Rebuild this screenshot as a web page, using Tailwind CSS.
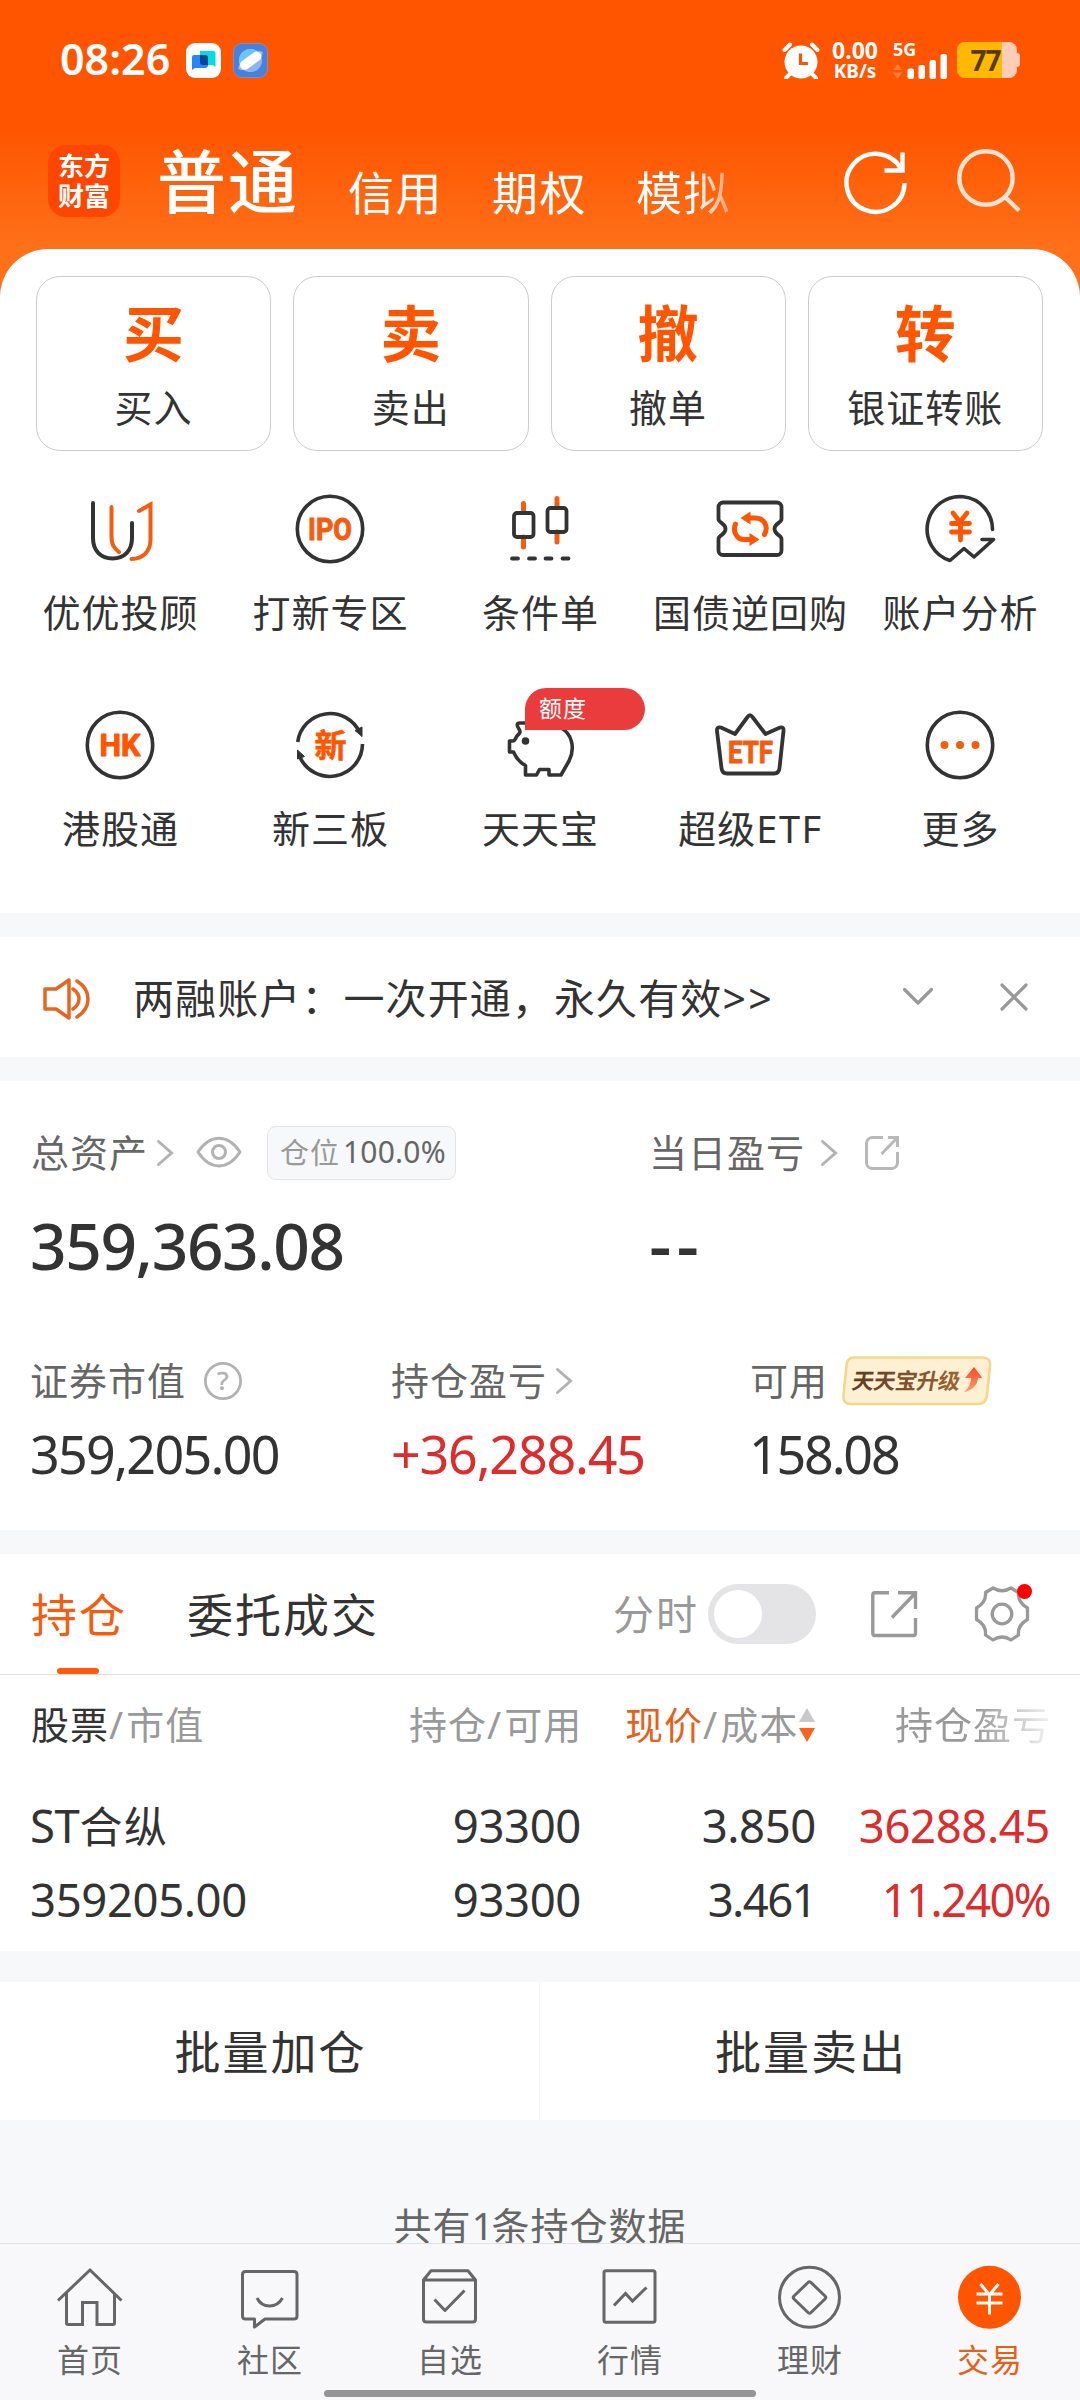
<!DOCTYPE html>
<html lang="zh-CN">
<head>
<meta charset="utf-8">
<title>交易</title>
<script src="https://cdn.jsdelivr.net/npm/@tailwindcss/browser@4"></script>
</head>
<body class="w-[1080px] h-[2400px] overflow-hidden bg-[#f7f8fa] text-[#333333] font-['Noto_Sans','Noto_Sans_CJK_SC',sans-serif]">
<div class="flex flex-col w-[1080px] h-[2400px]">

<!-- Header and shortcuts -->
<div class="bg-[linear-gradient(#ff5500_130px,#ff7019_249px)]">
  <div class="h-[120px] flex items-center pl-[60px] pr-[60px] text-white">
    <div class="w-[126px] text-[43px] leading-none font-semibold pb-[3px]">08:26</div>
    <svg class="w-[35px] h-[35px] shrink-0" viewBox="0 0 35 35"><rect width="35" height="35" rx="9" fill="#fff"/><path d="M14 8h13.500a2 2 0 0 1 2 2v14q-2-2-4-2H14z" fill="#06dce0"/><path d="M8 12h11a3 3 0 0 1 3 3v7a3 3 0 0 1-3 3H10q-2 0-4 2V14a2 2 0 0 1 2-2z" fill="#2a85fb"/><path d="M14 12h5a3 3 0 0 1 3 3v7h-5a3 3 0 0 1-3-3z" fill="#0a4695"/></svg>
    <svg class="w-[35px] h-[35px] ml-3 shrink-0" viewBox="0 0 35 35"><rect x=".5" y=".5" width="34" height="34" rx="8.500" fill="#4681dd" stroke="#8c8bb8"/><circle cx="17.500" cy="17.500" r="11.500" fill="#90b3ec"/><path d="M6.500 21A11.500 11.500 0 0 1 26 9.800z" fill="#68c8f3"/><ellipse cx="17.500" cy="17.500" rx="14.500" ry="5" transform="rotate(-36 17.500 17.500)" fill="#9dbcf0"/><rect x="5.500" y="13" width="24" height="9.500" rx="4.500" transform="rotate(-36 17.500 17.500)" fill="#fff"/></svg>
    <div class="grow"></div>
    <svg class="w-[38px] h-[38px]" viewBox="0 0 38 38"><circle cx="19" cy="21" r="16.500" fill="#fff"/><path d="M2.500 9L8 3.500M35.500 9L30 3.500M8 33l-4 4M30 33l4 4" stroke="#fff" stroke-width="4" stroke-linecap="round"/><path d="M18.500 12.500V22.500H26" fill="none" stroke="#ff5500" stroke-width="3.200"/></svg>
    <div class="w-[50px] ml-[10px] flex flex-col items-center font-bold">
      <div class="text-[23px] leading-[23px]">0.00</div>
      <div class="text-[19px] leading-[19px]">KB/s</div>
    </div>
    <div class="w-[56px] ml-[13px] flex flex-col">
      <div class="text-[18px] leading-[17px] font-bold">5G</div>
      <svg class="w-[56px] h-[26px] -mt-[5px]" viewBox="0 0 56 26"><path d="M0 17l4.500-6 4.500 6zM0 19.500h9L4.500 26z" fill="#ff7f3f"/><g fill="#fff"><rect x="14.500" y="15.500" width="6.500" height="10.500" rx="2"/><rect x="25.500" y="12" width="6.500" height="14" rx="2"/><rect x="36.500" y="7" width="6.500" height="19" rx="2"/><rect x="47.500" y="1" width="6.500" height="25" rx="2"/></g></svg>
    </div>
    <div class="flex items-center ml-[8px]">
      <div class="w-[60px] h-[36px] rounded-[8px] bg-[linear-gradient(90deg,#ffb900_45px,#ffccb5_45px)] text-[#5b3a08] text-[28px] leading-[36px] font-bold text-center tracking-[-1px] pr-[3px]">77</div>
      <div class="w-[3px] h-[14px] rounded-r-[3px] bg-[#ffccb5]"></div>
    </div>
  </div>

  <div class="h-[129px] flex pl-[48px] text-white">
    <div class="w-[72px] h-[72px] mt-[25px] rounded-[18px] bg-[#ff4600] flex flex-col items-center justify-center text-[26px] leading-[30px] font-bold"><span>东方</span><span>财富</span></div>
    <div class="ml-[37px] w-[191px] text-[69px] leading-[122px] tracking-[2px] font-medium">普通</div>
    <div class="w-[144px] pt-[11px] text-[46px] leading-[122px] tracking-[1.500px]">信用</div>
    <div class="w-[144px] pt-[11px] text-[46px] leading-[122px] tracking-[1.500px]">期权</div>
    <div class="w-[207px] pt-[11px] text-[46px] leading-[122px] tracking-[1.500px]"><span class="text-transparent bg-clip-text bg-[linear-gradient(90deg,#fff_60px,#ffffff60_95px)]">模拟</span></div>
    <svg class="w-[68px] h-[68px] mt-[28px] -ml-[2px]" viewBox="0 0 68 68" fill="none" stroke="#fff" stroke-width="4.500"><path d="M63.500 35A29 29 0 1 1 60 21"/><path d="M61.500 4.500V22.500H43.500"/></svg>
    <svg class="w-[68px] h-[68px] mt-[28px] ml-[45px]" viewBox="0 0 68 68" fill="none" stroke="#ffe2d0" stroke-width="4.500"><circle cx="32" cy="30" r="26.700"/><path d="M51 49L65 62.500"/></svg>
  </div>

  <div class="h-[664px] rounded-t-[48px] bg-white pt-[27px]">
    <div class="grid grid-cols-4 gap-[22px] pl-[36px] pr-[37px]">
      <div class="h-[175px] rounded-[24px] border border-[#cccccc] flex flex-col items-center pt-[23px]"><div class="text-[61px] leading-[68px] font-bold text-[#ff5500]">买</div><div class="text-[38px] leading-[40px] mt-[19px] tracking-[1px]">买入</div></div>
      <div class="h-[175px] rounded-[24px] border border-[#cccccc] flex flex-col items-center pt-[23px]"><div class="text-[61px] leading-[68px] font-bold text-[#ff5500]">卖</div><div class="text-[38px] leading-[40px] mt-[19px] tracking-[1px]">卖出</div></div>
      <div class="h-[175px] rounded-[24px] border border-[#cccccc] flex flex-col items-center pt-[23px]"><div class="text-[61px] leading-[68px] font-bold text-[#ff5500]">撤</div><div class="text-[38px] leading-[40px] mt-[19px] tracking-[1px]">撤单</div></div>
      <div class="h-[175px] rounded-[24px] border border-[#cccccc] flex flex-col items-center pt-[23px]"><div class="text-[61px] leading-[68px] font-bold text-[#ff5500]">转</div><div class="text-[38px] leading-[40px] mt-[19px] tracking-[1px]">银证转账</div></div>
    </div>

    <div class="grid grid-cols-5 gap-y-[58px] px-[15px] mt-[39px] text-[38px] leading-[40px] tracking-[1px] whitespace-nowrap">
      <div class="flex flex-col items-center h-[158px]">
        <svg class="w-[78px] h-[78px] shrink-0" viewBox="0 0 78 78" fill="none" stroke-width="4" stroke-linecap="round"><path d="M12 13V48C12 61 20 68.500 31.500 68.500S51 61 51 48V33" stroke="#333"/><path d="M30.500 17V46C30.500 55 33 58 38 62M58 21L69.500 14.500V50C69.500 61 62 69 50.500 69" stroke="#f45d10"/></svg>
        <div class="mt-[24px] pl-px">优优投顾</div>
      </div>
      <div class="flex flex-col items-center">
        <svg class="w-[78px] h-[78px] shrink-0" viewBox="0 0 78 78"><circle cx="39" cy="39" r="32.700" fill="none" stroke="#333" stroke-width="3.600"/><text x="17" y="50" textLength="44" lengthAdjust="spacingAndGlyphs" class="font-['Roboto'] font-bold text-[31px] tracking-normal" fill="#f45d10" stroke="#f45d10" stroke-width="1" stroke-linejoin="round">IPO</text></svg>
        <div class="mt-[24px] pl-px">打新专区</div>
      </div>
      <div class="flex flex-col items-center">
        <svg class="w-[78px] h-[78px] shrink-0" viewBox="0 0 78 78" fill="none" stroke-linecap="round"><path d="M22.500 13.500V22M22.500 47V57M56 8.500V17M56 42V52" stroke="#f45d10" stroke-width="5"/><g stroke="#333" stroke-width="3.800"><rect x="13" y="23" width="19.500" height="24" rx="3"/><rect x="46.500" y="18" width="19" height="24" rx="3"/><path d="M11 68.500H17M28 68.500H34M44.500 68.500H50.500M61.500 68.500H67.500"/></g></svg>
        <div class="mt-[24px] pl-px">条件单</div>
      </div>
      <div class="flex flex-col items-center">
        <svg class="w-[78px] h-[78px] shrink-0" viewBox="0 0 78 78" fill="none"><path d="M12 12.500H66A4.500 4.500 0 0 1 70.500 17V29C70.500 33 63.500 33 63.500 39S70.500 45 70.500 49V60.500A4.500 4.500 0 0 1 66 65H12A4.500 4.500 0 0 1 7.500 60.500V49C7.500 45 14.500 45 14.500 39S7.500 33 7.500 29V17A4.500 4.500 0 0 1 12 12.500Z" stroke="#333" stroke-width="3.800"/><g stroke="#ff5500" stroke-width="5" stroke-linecap="round"><path d="M24.500 34C21 43 27 49.500 33 49.500H40M38 28H44C53 28 58 36 53.500 44.500"/></g><path d="M29.500 28L39.500 21.500V34.500ZM48.500 49.500L38.500 43V56Z" fill="#ff5500"/></svg>
        <div class="mt-[24px] pl-px">国债逆回购</div>
      </div>
      <div class="flex flex-col items-center">
        <svg class="w-[78px] h-[78px] shrink-0" viewBox="0 0 78 78" fill="none" stroke-linecap="round" stroke-linejoin="round"><path d="M71.500 39.500A32.700 32.700 0 1 0 29 70.500L43 58.500L53 67L72.500 49.500H61" stroke="#333" stroke-width="3.600"/><path d="M32 23L39 32L46 23M39.500 32V50M30.500 33.500H48.500M30.500 42H48.500" stroke="#ff5500" stroke-width="4.800"/></svg>
        <div class="mt-[24px] pl-px">账户分析</div>
      </div>

      <div class="flex flex-col items-center h-[158px]">
        <svg class="w-[78px] h-[78px] shrink-0" viewBox="0 0 78 78"><circle cx="39" cy="39" r="32.700" fill="none" stroke="#333" stroke-width="3.600"/><text x="18.500" y="50" textLength="41" lengthAdjust="spacingAndGlyphs" class="font-['Roboto'] font-bold text-[31px] tracking-normal" fill="#ff5500" stroke="#ff5500" stroke-width="1" stroke-linejoin="round">HK</text></svg>
        <div class="mt-[24px] pl-px">港股通</div>
      </div>
      <div class="flex flex-col items-center">
        <svg class="w-[78px] h-[78px] shrink-0" viewBox="0 0 78 78"><path d="M6.700 36A32.700 32.700 0 0 1 69 27M71.500 38A32.700 32.700 0 0 1 8.500 50" fill="none" stroke="#333" stroke-width="3.600"/><path d="M64 24.500L71 21L71 30.500ZM6.500 53V44L13.500 50.500Z" fill="#333" stroke="#333" stroke-linejoin="round"/><text x="39.500" y="50.500" text-anchor="middle" class="font-['Noto_Sans_CJK_SC'] font-bold text-[32px] tracking-normal" fill="#ff5500" stroke="#ff5500" stroke-width=".6">新</text></svg>
        <div class="mt-[24px] pl-px">新三板</div>
      </div>
      <div class="flex flex-col items-center relative">
        <svg class="w-[78px] h-[78px] shrink-0" viewBox="0 0 78 78" fill="none"><path d="M26 17H19C15 17 16 20 18 23C20 26 19 27 16 30C14 33 14 35 12 35H8.500V46H12.500C15 52 18 56 24.500 59.500V69H35.500L38.500 63.500H48V69H60L68 55C75 41 70 27 60 22" stroke="#333" stroke-width="3.600" stroke-linejoin="round"/><circle cx="24.500" cy="35" r="3.800" fill="#333"/></svg>
        <div class="absolute left-[90px] -top-[18px] w-[120px] h-[42px] rounded-[21px] rounded-bl-none bg-[#ea3c3c] text-white text-[23px] leading-[41px] tracking-[1px] pl-[14px]">额度</div>
        <div class="mt-[24px] pl-px">天天宝</div>
      </div>
      <div class="flex flex-col items-center">
        <svg class="w-[78px] h-[78px] shrink-0" viewBox="0 0 78 78"><path d="M24 28L36.500 11Q39 7.500 41.500 11L54.500 28L69 21.500Q73 20.500 72.500 25L68.500 62Q68 67.500 63 67.500H16Q11 67.500 10.500 62L6 25Q5.500 20.500 10 21.500Z" fill="none" stroke="#333" stroke-width="3.800" stroke-linejoin="round"/><text x="17" y="56.500" textLength="45" lengthAdjust="spacingAndGlyphs" class="font-['Roboto'] font-bold text-[31px] tracking-normal" fill="#f45d10" stroke="#f45d10" stroke-width="1" stroke-linejoin="round">ETF</text></svg>
        <div class="mt-[24px] pl-px">超级<span class="tracking-[1.500px]">ETF</span></div>
      </div>
      <div class="flex flex-col items-center">
        <svg class="w-[78px] h-[78px] shrink-0" viewBox="0 0 78 78"><circle cx="39" cy="39" r="32.700" fill="none" stroke="#333" stroke-width="3.600"/><g fill="#f45d10"><circle cx="23.500" cy="39" r="4"/><circle cx="39" cy="39" r="4"/><circle cx="54.500" cy="39" r="4"/></g></svg>
        <div class="mt-[24px] pl-px">更多</div>
      </div>
    </div>
  </div>
</div>

<!-- Notice -->
<div class="h-[120px] mt-[24px] bg-white flex items-center pl-[42px] pr-[52px]">
  <svg class="w-[48px] h-[46px] mt-[3px]" viewBox="0 0 48 46" fill="none" stroke="#e8641f" stroke-width="3.500" stroke-linejoin="round" stroke-linecap="round"><path d="M3 13H14L27 4V42L14 33H3ZM31 13Q37 17 37 23T31 33M35 5Q46 12 46 23T35 41"/></svg>
  <div class="ml-[43px] text-[41px] leading-none tracking-[1.100px] pt-[3px] whitespace-nowrap">两融账户：一次开通，永久有效<span class="tracking-[2.500px]">&gt;&gt;</span></div>
  <div class="grow"></div>
  <svg class="w-[32px] h-[20px]" viewBox="0 0 32 20" fill="none" stroke="#999" stroke-width="3.200" stroke-linecap="round" stroke-linejoin="round"><path d="M2.500 2.500L16 16L29.500 2.500"/></svg>
  <svg class="w-[28px] h-[28px] ml-[66px]" viewBox="0 0 28 28" stroke="#999" stroke-width="3.200" stroke-linecap="round"><path d="M2 2L26 26M26 2L2 26"/></svg>
</div>

<!-- Assets -->
<div class="h-[449px] mt-[24px] pt-[45px] bg-white px-[30px] text-[38px] tracking-[1px] text-[#666666]">
  <div class="flex items-center h-[54px] leading-none whitespace-nowrap">
    <div class="w-[126px] pl-px -mt-[3px]">总资产</div>
    <svg class="w-[18px] h-[28px]" viewBox="0 0 18 28" fill="none" stroke="#b2b2b2" stroke-width="3" stroke-linecap="round"><path d="M2.500 2.500L15.500 14L2.500 25.500"/></svg>
    <svg class="w-[46px] h-[32px] ml-[22px] -mt-[3px]" viewBox="0 0 46 32" fill="none" stroke="#b2b2b2" stroke-width="3"><path d="M2 16C14-2.500 32-2.500 44 16C32 34.500 14 34.500 2 16Z" stroke-linejoin="round"/><circle cx="23" cy="16" r="6.500"/></svg>
    <div class="ml-[25px] w-[189px] h-[54px] rounded-[9px] border border-[#e2e3e6] bg-[#f7f8fa] pl-[12px] pb-[2px] flex items-center text-[29px]"><span class="text-[#999999] w-[63px]">仓位</span><span class="text-[30px] tracking-[0.200px]">100.0%</span></div>
    <div class="ml-[193px] w-[171px] -mt-[3px]">当日盈亏</div>
    <svg class="w-[18px] h-[28px]" viewBox="0 0 18 28" fill="none" stroke="#b2b2b2" stroke-width="3" stroke-linecap="round"><path d="M2.500 2.500L15.500 14L2.500 25.500"/></svg>
    <svg class="w-[36px] h-[36px] ml-[26px]" viewBox="0 0 36 36" fill="none" stroke="#b8b8b8" stroke-width="3"><path d="M19 2.500H8A6 6 0 0 0 2.500 8V28A6 6 0 0 0 8 33.500H28A6 6 0 0 0 33.500 28V17M24 2.500H33.500V12M33 3L17.500 19"/></svg>
  </div>
  <div class="flex h-[80px] mt-[26px] items-center text-[64px] leading-none font-medium text-[#333333]">
    <div class="w-[619px] tracking-[-1.400px]">359,363.08</div>
    <div class="text-[70px] tracking-[5px] -mt-[4px]">--</div>
  </div>
  <div class="flex items-center h-[50px] mt-[70px] leading-none whitespace-nowrap">
    <div class="w-[174px] -mt-[2px]">证券市值</div>
    <svg class="w-[38px] h-[38px]" viewBox="0 0 38 38"><circle cx="19" cy="19" r="17.600" fill="none" stroke="#b2b2b2" stroke-width="2.800"/><text x="19" y="28" text-anchor="middle" class="text-[26px] tracking-normal" fill="#b2b2b2" stroke="#b2b2b2" stroke-width=".6">?</text></svg>
    <div class="ml-[149px] w-[164px] -mt-[2px]">持仓盈亏</div>
    <svg class="w-[18px] h-[28px]" viewBox="0 0 18 28" fill="none" stroke="#b2b2b2" stroke-width="3" stroke-linecap="round"><path d="M2.500 2.500L15.500 14L2.500 25.500"/></svg>
    <div class="ml-[177px] w-[92px] -mt-[2px]">可用</div>
    <svg class="w-[150px] h-[50px]" viewBox="0 0 150 50"><defs><linearGradient id="up" x1="0" y1="0" x2="0" y2="1"><stop offset="0" stop-color="#ff4422"/><stop offset="1" stop-color="#f9a070"/></linearGradient><linearGradient id="br" x1="0" y1="0" x2="1" y2="0"><stop offset="0" stop-color="#5f3c20"/><stop offset="1" stop-color="#9a6534"/></linearGradient></defs><path d="M12 1.500H140Q149 1.500 148 10L145 39Q144 48 136 48H9Q0.500 48 1.500 39L4.500 10Q5 1.500 12 1.500Z" fill="#fff0d3" stroke="#f5d78c" stroke-width="2.600"/><text transform="translate(9 33) skewX(-10)" textLength="108" class="font-['Noto_Sans_CJK_SC'] font-bold text-[22px] tracking-normal" fill="url(#br)">天天宝升级</text><path d="M132 11L140.500 22H136Q135 33 122 36Q129 30 129 22H123Z" fill="url(#up)"/></svg>
  </div>
  <div class="flex items-center h-[70px] mt-[13px] text-[52px] leading-none text-[#333333] tracking-[-1.700px]">
    <div class="w-[361px]">359,205.00</div>
    <div class="w-[358px] tracking-[-1.200px] text-[#dd2c2c]">+36,288.45</div>
    <div class="tracking-[-2.200px]">158.08</div>
  </div>
</div>

<!-- Holdings -->
<div class="h-[397px] mt-[24px] bg-white">
  <div class="h-[121px] border-b border-[#dfdfdf] flex px-[31px] text-[46px] leading-[121px] tracking-[2px] whitespace-nowrap">
    <div class="w-[94px] flex flex-col items-center text-[#f45d10]"><div class="h-[114px] pl-[2px]">持仓</div><div class="w-[42px] h-[6px] rounded-full bg-[#ff5a08]"></div></div>
    <div class="ml-[62px] w-[426px]">委托成交</div>
    <div class="w-[95px] text-[41px] tracking-[2px] text-[#999999]">分时</div>
    <div class="w-[108px] h-[60px] mt-[30px] rounded-full bg-[#e4e4e6] p-[6px]"><div class="w-[48px] h-[48px] rounded-full bg-white"></div></div>
    <svg class="w-[48px] h-[48px] mt-[36px] ml-[54px]" viewBox="0 0 48 48" fill="none" stroke="#999" stroke-width="3.400"><path d="M19 2.800H5Q2.800 2.800 2.800 5V43Q2.800 45.500 5 45.500H43.500Q45.500 45.500 45.500 43V28M28 2.800H45.500V19M45 3.500L22 27.500"/></svg>
    <div class="relative ml-[55px] w-[58px] h-[58px] mt-[31px]">
      <svg class="w-[58px] h-[58px]" viewBox="0 0 58 58" fill="none" stroke="#999" stroke-width="3.300" stroke-linejoin="round"><path d="M20 3Q29 8.500 38 3L45.500 7.500Q44.500 17 54.500 23V34.500Q44.500 40 45.500 50L38 55Q29 49 20 55L12.500 50Q13.500 40 3.500 34.500V23Q13.500 17 12.500 7.500Z"/><circle cx="29" cy="29" r="9.800"/></svg>
      <div class="absolute left-[44px] -top-[1px] w-[15px] h-[15px] rounded-full bg-[#ff0000]"></div>
    </div>
  </div>
  <div class="h-[98px] flex pl-[31px] text-[38px] leading-[99px] tracking-[1px] text-[#999999] whitespace-nowrap">
    <div class="w-[378px]"><span class="text-[#333333]">股票</span><span class="tracking-[3px]">/</span>市值</div>
    <div class="w-[216px]">持仓<span class="tracking-[3px]">/</span>可用</div>
    <div class="w-[173px]"><span class="text-[#e85f18]">现价</span><span class="tracking-[3px]">/</span>成本</div>
    <svg class="w-[18px] h-[36px] mt-[32px]" viewBox="0 0 18 36"><path d="M1 15L9 1L17 15Z" fill="#c8c8c8"/><path d="M1 21H17L9 35Z" fill="#fb611a"/></svg>
    <div class="ml-[79px]"><span class="text-transparent bg-clip-text bg-[linear-gradient(90deg,#999_80px,#99999930_150px)]">持仓盈亏</span></div>
  </div>
  <div class="grid grid-cols-[300px_251px_235px_234px] px-[30px] text-[45.500px] leading-[72px] tracking-[-0.400px] text-right pt-[16px] whitespace-nowrap">
    <div class="text-left">ST<span class="text-[43px] tracking-[1.500px]">合纵</span></div><div>93300</div><div>3.850</div><div class="text-[#dd2c2c]">36288.45</div>
    <div class="text-left">359205.00</div><div>93300</div><div class="tracking-[-1.600px]">3.461</div><div class="tracking-[-1.700px] text-[#dd2c2c]">11.240%</div>
  </div>
</div>

<!-- Batch actions -->
<div class="h-[138px] mt-[31px] bg-white grid grid-cols-2 text-center text-[46px] leading-[139px] tracking-[2px]">
  <div class="border-r border-[#f3f4f6] pl-[2px]">批量加仓</div>
  <div class="pl-[2px]">批量卖出</div>
</div>

<div class="h-[123px] pt-[80px] text-center text-[38px] leading-[50px] tracking-[1px] text-[#666666] overflow-hidden">共有<span class="tracking-[-2px]">1</span>条持仓数据</div>

<!-- Bottom navigation -->
<div class="h-[157px] shrink-0 border-t border-[#e2e2e4] bg-[#f8f8fa] flex flex-col items-center">
  <div class="w-full grid grid-cols-6 text-center text-[32px] leading-[40px] tracking-[1px] text-[#666666] pt-[17px] h-[146px]">
    <div class="flex flex-col items-center"><svg class="w-[72px] h-[72px] mb-[7px]" viewBox="0 0 72 72" fill="none" stroke="#666" stroke-width="3"><path d="M4 39.500L36 9L67.500 39.500M12.500 32V62Q12.500 63.500 14 63.500H28.500V41.500H43V63.500H59Q60.500 63.500 60.500 62V32"/></svg>首页</div>
    <div class="flex flex-col items-center"><svg class="w-[72px] h-[72px] mb-[7px]" viewBox="0 0 72 72" fill="none" stroke="#666" stroke-width="3" stroke-linejoin="round"><path d="M11.500 10.500H60Q63 10.500 63 13.500V55Q63 58 60 58H31L20.500 66V58H11.500Q8.500 58 8.500 55V13.500Q8.500 10.500 11.500 10.500ZM23 37Q27 45 35.500 45T48.500 37"/></svg>社区</div>
    <div class="flex flex-col items-center"><svg class="w-[72px] h-[72px] mb-[7px]" viewBox="0 0 72 72" fill="none" stroke="#666" stroke-width="3" stroke-linejoin="round"><path d="M9.500 19L17 9.700H54L61.500 19V58Q61.500 61 58.500 61H12.500Q9.500 61 9.500 58ZM9.500 19H61.500M20.500 38.500L31 49.500L50.500 29.500"/></svg>自选</div>
    <div class="flex flex-col items-center"><svg class="w-[72px] h-[72px] mb-[7px]" viewBox="0 0 72 72" fill="none" stroke="#666" stroke-width="3"><rect x="10" y="9.700" width="51" height="51.500" rx="2"/><path d="M20 44.500L31.500 32.500L38.500 40L52.500 26.500"/></svg>行情</div>
    <div class="flex flex-col items-center"><svg class="w-[72px] h-[72px] mb-[7px]" viewBox="0 0 72 72" fill="none" stroke="#666" stroke-width="3"><circle cx="35.500" cy="36.300" r="30"/><path d="M34 21.500Q35.500 20 37 21.500L51 35Q52.500 36.500 51 38L37 51.500Q35.500 53 34 51.500L20 38Q18.500 36.500 20 35Z"/></svg>理财</div>
    <div class="flex flex-col items-center text-[#e85f18]"><svg class="w-[72px] h-[72px] mb-[7px]" viewBox="0 0 72 72" fill="none" stroke="#fff" stroke-width="3"><circle cx="35.500" cy="36.300" r="31.500" fill="#ff5500" stroke="none"/><path d="M26.500 23L35.500 34L44.500 23M22.500 33H48.500M22.500 42H48.500M35.500 34V53.500"/></svg>交易</div>
  </div>
  <div class="w-[432px] h-[7px] rounded-full bg-[#949494]"></div>
</div>

</div>
</body>
</html>
